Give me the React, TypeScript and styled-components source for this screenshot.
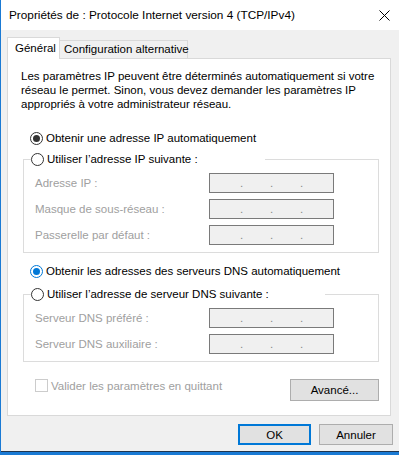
import React from "react";
import styled, { createGlobalStyle } from "styled-components";

const Global = createGlobalStyle`
  html, body { margin: 0; padding: 0; background: #fff; }
  body {
    font-family: "Liberation Sans", Arial, sans-serif;
    font-size: 11.5px;
    color: #000;
  }
  * { box-sizing: border-box; }
`;

const Window = styled.div`
  width: 399px;
  height: 455px;
  border-left: 1px solid #1a7ad4;
  display: flex;
  flex-direction: column;
  background: #f0f0f0;
  overflow: hidden;
`;

const TitleBar = styled.div`
  height: 30px;
  flex: none;
  background: #fff;
  display: flex;
  align-items: center;
  justify-content: space-between;
  padding-left: 8px;
  padding-right: 9px;
`;

const Title = styled.span`
  font-size: 11.8px;
  color: #000;
`;

const Body = styled.div`
  flex: 1;
  display: flex;
  flex-direction: column;
  padding: 7px 6px 0 6px;
`;

const TabStrip = styled.div`
  display: flex;
  align-items: flex-end;
  height: 21px;
  position: relative;
  z-index: 1;
`;

const Tab = styled.div<{ $active?: boolean; $w: number }>`
  width: ${(p) => p.$w}px;
  height: ${(p) => (p.$active ? 22 : 18)}px;
  margin-bottom: ${(p) => (p.$active ? -1 : 0)}px;
  background: ${(p) => (p.$active ? "#fff" : "#f0f0f0")};
  border: 1px solid #d9d9d9;
  border-bottom: none;
  border-left: ${(p) => (p.$active ? "1px solid #d9d9d9" : "none")};
  padding-left: ${(p) => (p.$active ? 7 : 4)}px;
  padding-top: ${(p) => (p.$active ? 3 : 1)}px;
  line-height: 15px;
  white-space: nowrap;
`;

const Panel = styled.div`
  width: 384px;
  height: 358px;
  background: #fff;
  border: 1px solid #d9d9d9;
  padding: 10px 11px 0 15px;
  display: flex;
  flex-direction: column;
`;

const Intro = styled.p`
  margin: 0 0 0 -2px;
  line-height: 14px;
  white-space: nowrap;
`;

const RadioRow = styled.label`
  display: flex;
  align-items: center;
  gap: 3px;
  height: 16px;
  margin-left: 7px;
  white-space: nowrap;
`;

const RadioCircle = styled.span<{ $checked?: boolean; $blue?: boolean }>`
  width: 13px;
  height: 13px;
  flex: none;
  border-radius: 50%;
  border: 1px solid ${(p) => (p.$blue ? "#0078d7" : "#333")};
  background: #fff;
  display: flex;
  align-items: center;
  justify-content: center;
  &::after {
    content: "";
    display: ${(p) => (p.$checked ? "block" : "none")};
    width: 7px;
    height: 7px;
    border-radius: 50%;
    background: ${(p) => (p.$blue ? "#0078d7" : "#333")};
  }
`;

const Group = styled.fieldset<{ $mt: number }>`
  margin: ${(p) => p.$mt}px 0 0 0;
  border: 1px solid #dcdcdc;
  padding: 6px 0 7px 7px;
  min-width: 0;
`;

const Legend = styled.legend<{ $w: number }>`
  padding: 0;
  width: ${(p) => p.$w}px;
  height: 16px;
  display: flex;
  align-items: center;
`;

const FieldGrid = styled.div`
  display: grid;
  grid-template-columns: 174px 125px;
  grid-auto-rows: 20px;
  row-gap: 6px;
  padding-left: 4px;
`;

const FieldLabel = styled.span`
  color: #a0a0a0;
  display: flex;
  align-items: center;
  white-space: nowrap;
`;

const IpBox = styled.div`
  width: 125px;
  height: 20px;
  border: 1px solid #7a7a7a;
  background: #f0f0f0;
  display: flex;
  justify-content: center;
  align-items: center;
  color: #8a8a8a;
  line-height: 18px;
`;

const Dot = styled.span`
  width: 30px;
  text-align: center;
`;

const BottomRow = styled.div`
  margin-top: 17px;
  display: flex;
  justify-content: space-between;
  align-items: flex-start;
  height: 22px;
`;

const CheckRow = styled.label`
  display: flex;
  align-items: center;
  gap: 3px;
  margin-left: 12px;
  height: 13px;
  color: #a0a0a0;
  white-space: nowrap;
`;

const CheckBox = styled.span`
  width: 13px;
  height: 13px;
  border: 1px solid #cccccc;
  background: #fff;
`;

const Button = styled.button<{ $w: number; $h: number; $default?: boolean }>`
  width: ${(p) => p.$w}px;
  height: ${(p) => p.$h}px;
  background: #e1e1e1;
  border: ${(p) => (p.$default ? "2px solid #0078d7" : "1px solid #adadad")};
  font: inherit;
  color: #000;
  padding: 0;
  display: flex;
  align-items: center;
  justify-content: center;
`;

const Footer = styled.div`
  margin-top: 8px;
  display: flex;
  justify-content: flex-end;
  gap: 8px;
  width: 386px;
`;

const BottomEdge = styled.div`
  margin-top: auto;
  height: 4px;
  border-top: 1px solid #20354f;
  background: #1a7ad4;
  margin-left: -7px;
  margin-right: -6px;
`;

function Field({ label }: { label: string }) {
  return (
    <>
      <FieldLabel>{label}</FieldLabel>
      <IpBox>
        <Dot>.</Dot>
        <Dot>.</Dot>
        <Dot>.</Dot>
      </IpBox>
    </>
  );
}

export default function App() {
  return (
    <>
      <Global />
      <Window>
        <TitleBar>
          <Title>Propriétés de : Protocole Internet version 4 (TCP/IPv4)</Title>
          <svg width="11" height="11" viewBox="0 0 11 11">
            <path d="M0.5 0.5 L10.5 10.5 M10.5 0.5 L0.5 10.5" stroke="#000" strokeWidth="1" fill="none" />
          </svg>
        </TitleBar>
        <Body>
          <TabStrip>
            <Tab $active $w={53}>Général</Tab>
            <Tab $w={128}>Configuration alternative</Tab>
          </TabStrip>
          <Panel>
            <Intro>
              Les paramètres IP peuvent être déterminés automatiquement si votre
              <br />
              réseau le permet. Sinon, vous devez demander les paramètres IP
              <br />
              appropriés à votre administrateur réseau.
            </Intro>
            <RadioRow style={{ marginTop: 19 }}>
              <RadioCircle $checked />
              Obtenir une adresse IP automatiquement
            </RadioRow>
            <Group $mt={5}>
              <Legend $w={234}>
                <RadioRow as="span" style={{ marginLeft: 0 }}>
                  <RadioCircle />
                  Utiliser l’adresse IP suivante :
                </RadioRow>
              </Legend>
              <FieldGrid>
                <Field label="Adresse IP :" />
                <Field label="Masque de sous-réseau :" />
                <Field label="Passerelle par défaut :" />
              </FieldGrid>
            </Group>
            <RadioRow style={{ marginTop: 10 }}>
              <RadioCircle $checked $blue />
              Obtenir les adresses des serveurs DNS automatiquement
            </RadioRow>
            <Group $mt={7}>
              <Legend $w={294}>
                <RadioRow as="span" style={{ marginLeft: 0 }}>
                  <RadioCircle />
                  Utiliser l’adresse de serveur DNS suivante :
                </RadioRow>
              </Legend>
              <FieldGrid>
                <Field label="Serveur DNS préféré :" />
                <Field label="Serveur DNS auxiliaire :" />
              </FieldGrid>
            </Group>
            <BottomRow>
              <CheckRow>
                <CheckBox />
                Valider les paramètres en quittant
              </CheckRow>
              <Button $w={89} $h={22}>Avancé...</Button>
            </BottomRow>
          </Panel>
          <Footer>
            <Button $w={73} $h={21} $default>OK</Button>
            <Button $w={74} $h={21}>Annuler</Button>
          </Footer>
          <BottomEdge />
        </Body>
      </Window>
    </>
  );
}
